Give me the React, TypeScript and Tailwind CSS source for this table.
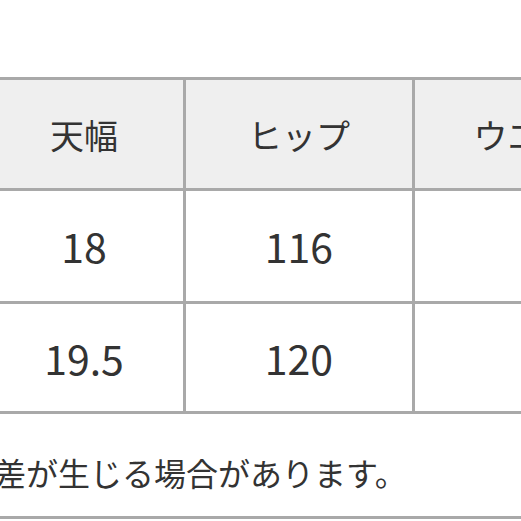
export default function App() {
  const headers = ["天幅", "ヒップ", "ウエスト"]
  const rows = [
    ["18", "116", ""],
    ["19.5", "120", ""],
  ]

  return (
    <div
      className="w-[521px] h-[521px] overflow-hidden bg-white text-[#333]"
      style={{ fontFamily: '"Noto Sans CJK JP", "Noto Sans", sans-serif' }}
    >
      <div className="pt-[77px] ml-[-15px] w-[700px]">
        {/* サイズ表 */}
        <div className="grid grid-cols-[201px_229px_256px] border-t-[3px] border-[#a9a9a9]">
          {headers.map((h) => (
            <div
              key={h}
              className="h-[111px] flex items-center justify-center bg-[#efefef] border-r-[3px] border-b-[3px] border-[#a9a9a9] text-[34px]"
            >
              {h}
            </div>
          ))}
          {rows.map((row, i) =>
            row.map((v, j) => (
              <div
                key={`${i}-${j}`}
                className={`flex items-center justify-center bg-white border-r-[3px] border-b-[3px] border-[#a9a9a9] text-[41px] ${
                  i === 0 ? "h-[113px]" : "h-[110px]"
                }`}
              >
                {v}
              </div>
            ))
          )}
        </div>
      </div>

      {/* 注記 */}
      <div className="h-[105px] pt-[14px] ml-[-38px] flex items-center border-b-[3px] border-[#a9a9a9] text-[32px]">
        誤差が生じる場合があります。
      </div>
    </div>
  )
}
